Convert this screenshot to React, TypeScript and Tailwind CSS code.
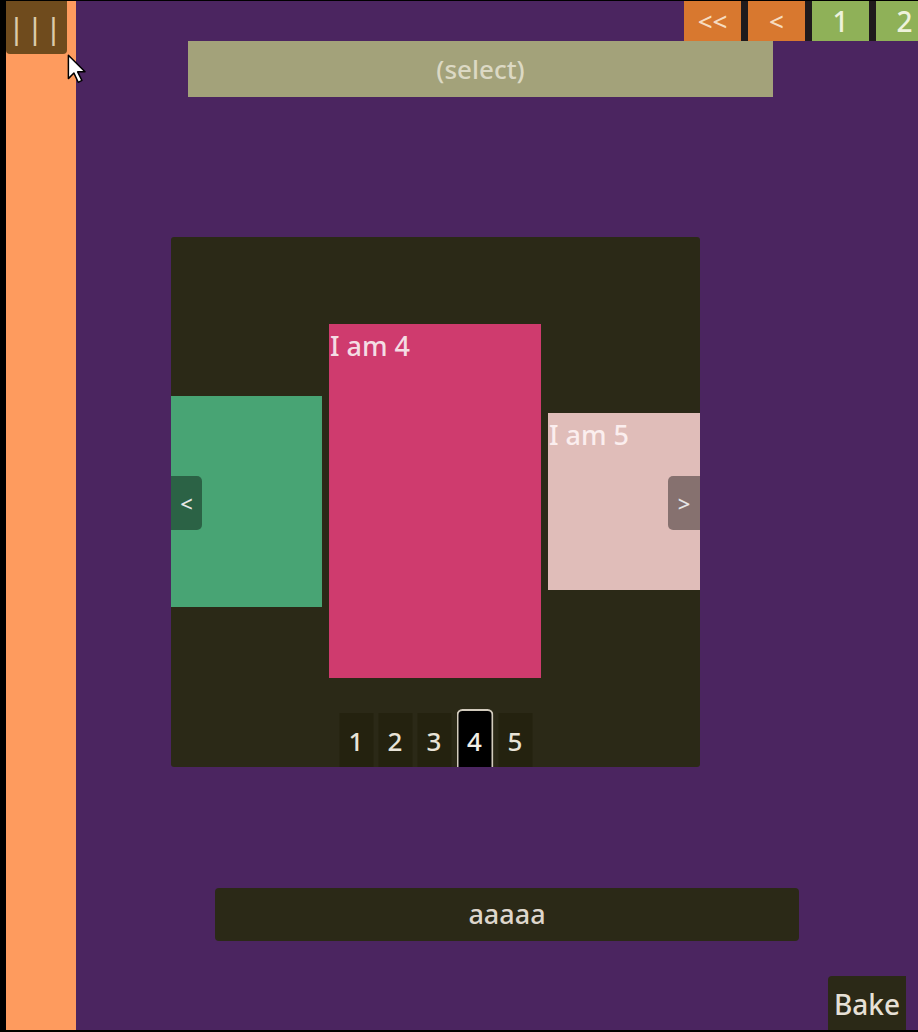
import React from "react";

const font = { fontFamily: '"Noto Sans", "Open Sans", sans-serif' };

function Cursor() {
  return (
    <svg
      className="pointer-events-none absolute left-[61px] top-[53px]"
      width="20"
      height="32"
      viewBox="0 0 16 26"
    >
      <path
        d="M1 1 L1 20 L5.5 15.5 L9 23 L12 21.5 L8.5 14.5 L14.5 14.5 Z"
        fill="#ffffff"
        stroke="#000000"
        strokeWidth="1.2"
        strokeLinejoin="round"
      />
    </svg>
  );
}

function Carousel() {
  const dots = ["1", "2", "3", "4", "5"];

  return (
    <div className="relative ml-[95px] mt-[140px] h-[530px] w-[529px] overflow-hidden rounded-[3px] bg-[#2b2917]">
      {/* Slides */}
      <div className="flex h-full items-center gap-[7px] pb-[2px]">
        <div className="h-[211px] w-[151px] shrink-0 bg-[#48a474]" />
        <div className="h-[354px] w-[212px] shrink-0 bg-[#cf3b6e] pl-[1px] text-[27px] font-medium leading-[44px] text-[#f4dde4]">
          I am 4
        </div>
        <div className="h-[177px] w-[152px] shrink-0 bg-[#e0bdb9] pl-[1px] text-[27px] font-medium leading-[44px] text-[#fbeeee]">
          I am 5
        </div>
      </div>

      {/* Arrows */}
      <button className="absolute left-0 top-[239px] flex h-[54px] w-[31px] items-center justify-center rounded-r-[5px] bg-black/40 text-[22px] font-medium text-[#e6e6e6]">
        &lt;
      </button>
      <button className="absolute right-0 top-[239px] flex h-[54px] w-[32px] items-center justify-center rounded-l-[5px] bg-black/40 text-[22px] font-medium text-[#e6e6e6]">
        &gt;
      </button>

      {/* Dots */}
      <div className="absolute bottom-0 left-1/2 flex -translate-x-1/2 items-end gap-[5px]">
        {dots.map((d) =>
          d === "4" ? (
            <div
              key={d}
              className="flex h-[58px] w-[37px] items-center justify-center rounded-t-[6px] border-2 border-b-0 border-[#d2cbbd] bg-black pt-[4px] text-[26px] font-medium text-[#f2efe6]"
            >
              {d}
            </div>
          ) : (
            <div
              key={d}
              className="flex h-[54px] w-[34px] items-center justify-center bg-[#24220f] pt-[2px] text-[26px] font-medium text-[#e8e4d8]"
            >
              {d}
            </div>
          )
        )}
      </div>
    </div>
  );
}

export default function App() {
  return (
    <div
      style={font}
      className="relative flex h-[1032px] w-[918px] overflow-hidden border-t border-b-2 border-l-[6px] border-black bg-[#4b2560]"
    >
      {/* Sidebar */}
      <div className="w-[70px] shrink-0 bg-[#fe9b5e]">
        <button className="flex h-[53px] w-[61px] items-center justify-center rounded-b-[4px] bg-[#6f4b1d] text-[28px] font-medium tracking-[3px] text-[#dccbaa]">
          |||
        </button>
      </div>

      {/* Main */}
      <div className="flex flex-1 flex-col">
        {/* Pager */}
        <div className="-mr-[15px] flex justify-end">
          <div className="flex gap-[7px] bg-[#1f1a1c]">
            <button className="flex h-[40px] w-[57px] items-center justify-center bg-[#d8782f] text-[26px] font-medium text-[#f6dcc0]">
              &lt;&lt;
            </button>
            <button className="flex h-[40px] w-[57px] items-center justify-center bg-[#d8782f] text-[26px] font-medium text-[#f6dcc0]">
              &lt;
            </button>
            <button className="flex h-[40px] w-[57px] items-center justify-center bg-[#8fb158] text-[28px] font-medium text-[#eef2dc]">
              1
            </button>
            <button className="flex h-[40px] w-[57px] items-center justify-center bg-[#8fb158] text-[28px] font-medium text-[#eef2dc]">
              2
            </button>
          </div>
        </div>

        {/* Select */}
        <div className="ml-[112px] flex h-[56px] w-[585px] items-center justify-center bg-[#a3a27a] text-[26px] font-medium text-[#dcd9c4]">
          (select)
        </div>

        <Carousel />

        {/* Input */}
        <div className="ml-[139px] mt-[121px] flex h-[53px] w-[584px] items-center justify-center rounded-[4px] bg-[#2b2917] text-[27px] font-medium text-[#ddd6cc]">
          aaaaa
        </div>

        {/* Bake */}
        <div className="mt-auto flex justify-end pr-[12px]">
          <button className="flex h-[54px] w-[78px] items-center justify-center rounded-tl-[4px] bg-[#2b2917] pt-[2px] text-[28px] font-medium text-[#e6e0d6]">
            Bake
          </button>
        </div>
      </div>

      <Cursor />
    </div>
  );
}
